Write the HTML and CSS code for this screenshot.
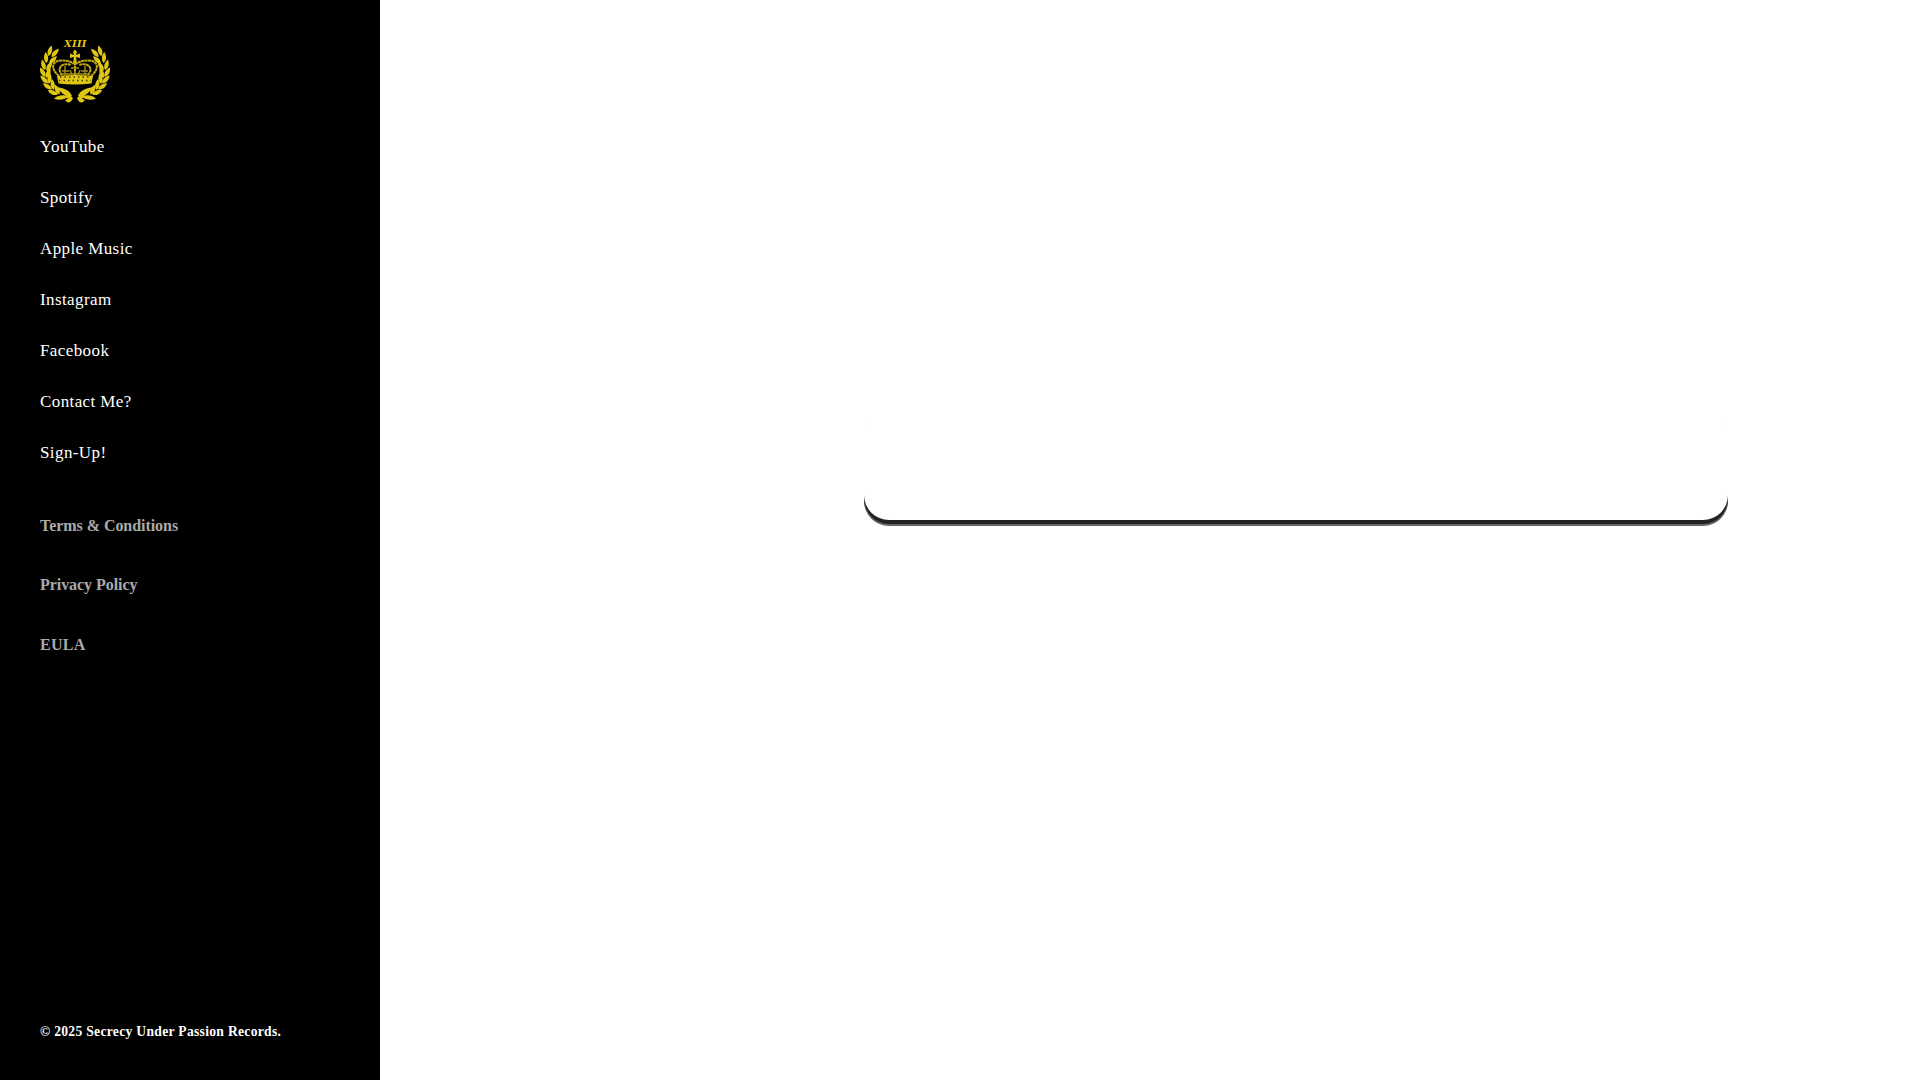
FILE: index.html
```html
<!DOCTYPE html>
<html lang="en">
<head>
<meta charset="utf-8">
<title>Secrecy Under Passion Records</title>
<link rel="stylesheet" href="styles.css">
</head>
<body>
<aside class="sidebar">
  <a class="logo" href="#">
    <svg viewBox="0 0 70 64" width="70" height="64" aria-label="XIII">
      <defs>
        <path id="leaf" d="M0 0C-2.9-3-2.9-7 0-11C2.7-7 2.7-3 0 0Z"/>
        <g id="branch">
          <use href="#leaf" transform="translate(8.5 16) rotate(16)"/>
          <use href="#leaf" transform="translate(11.5 17) rotate(42)"/>
          <use href="#leaf" transform="translate(6.5 23) rotate(-4)"/>
          <use href="#leaf" transform="translate(9 24) rotate(46)"/>
          <use href="#leaf" transform="translate(5 30) rotate(-16)"/>
          <use href="#leaf" transform="translate(6.5 31) rotate(30)"/>
          <use href="#leaf" transform="translate(5.5 37) rotate(-30)"/>
          <use href="#leaf" transform="translate(6.5 38) rotate(20)"/>
          <use href="#leaf" transform="translate(8 43.5) rotate(-44)"/>
          <use href="#leaf" transform="translate(9 44) rotate(6)"/>
          <use href="#leaf" transform="translate(12 49.5) rotate(-56)"/>
          <use href="#leaf" transform="translate(13.5 50) rotate(-8)"/>
          <use href="#leaf" transform="translate(18 54.5) rotate(-68)"/>
          <use href="#leaf" transform="translate(19.5 54.5) rotate(-26)"/>
          <path d="M17 47C23 48 30 50 32 56L28 59C25 54 20 53 17 47Z"/>
          <path d="M14 58.5C19 54.5 24 54.5 28 57C24 60 18 60.5 14 58.5ZM25 60.5L31 56.5L33 58C32 61 30 63 28 62.5Z"/>
        </g>
      </defs>
      <text class="numeral" x="35" y="7.2" textLength="23" lengthAdjust="spacingAndGlyphs">XIII</text>
      <g class="gold">
        <use href="#branch"/>
        <use href="#branch" transform="matrix(-1 0 0 1 70 0)"/>
        <path d="M35 9.5L37 12L35.8 15L40 13.5V18L36 17L37 24H33L34 17L30 18V13.5L34.2 15L33 12Z"/>
        <path d="M17 36Q35 34 53 36L51.5 43.5Q35 45.5 18.5 43.5Z"/>
      </g>
      <g class="arches">
        <path d="M19 36C9 28 13 20 22 20.5Q30 20.5 34 24M51 36C61 28 57 20 48 20.5Q40 20.5 36 24"/>
        <path d="M22 35C16 28 22 22 31 25M48 35C54 28 48 22 39 25M35 22V35"/>
      </g>
      <path class="filigree" d="M31 28h8M25 26v9M22 31h7M45 26v9M41 31h7M30 30l2 5M40 30l-2 5M20 34h30"/>
      <path class="jewels" d="M20 37h31M19 40.5h32"/>
    </svg>
  </a>
  <nav class="links">
    <a href="#">YouTube</a>
    <a href="#">Spotify</a>
    <a href="#">Apple Music</a>
    <a href="#">Instagram</a>
    <a href="#">Facebook</a>
    <a href="#">Contact Me?</a>
    <a href="#">Sign-Up!</a>
  </nav>
  <div class="legal">
    <a href="#">Terms &amp; Conditions</a>
    <a href="#">Privacy Policy</a>
    <a class="wide" href="#">EULA</a>
  </div>
  <footer class="copyright">© 2025 Secrecy Under Passion Records.</footer>
</aside>
<main class="content">
  <section class="player"></section>
</main>
</body>
</html>
```
FILE: styles.css
```css
* { box-sizing: border-box; }
body {
  margin: 0;
  display: flex;
  height: 100vh;
  overflow: hidden;
  background: #fff;
  font-family: "Liberation Serif", "Times New Roman", serif;
}
a { color: inherit; text-decoration: none; }
.sidebar {
  display: flex;
  flex-direction: column;
  flex: none;
  width: 380px;
  padding: 40px;
  background: #000;
  color: #fff;
}
.logo { display: block; height: 64px; }
.logo svg { display: block; overflow: visible; }
.numeral {
  font-family: "Liberation Serif", serif;
  font-size: 11px;
  font-weight: bold;
  font-style: italic;
  text-anchor: middle;
  fill: #e6cb13;
}
.gold { fill: #dfc611; }
.arches { fill: none; stroke: #c4ad13; stroke-width: 2; stroke-dasharray: 3 .4; }
.filigree { fill: none; stroke: #a08d10; stroke-width: 1.4; }
.jewels { fill: none; stroke: #4a4007; stroke-width: 1.3; stroke-dasharray: 1.5 3; }
.links {
  display: flex;
  flex-direction: column;
  gap: 31px;
  margin-top: 33px;
  font-size: 17px;
  line-height: 20px;
  letter-spacing: .4px;
}
.legal {
  display: flex;
  flex-direction: column;
  gap: 41.3px;
  margin-top: 54px;
  color: #aaa;
  font-size: 16px;
  font-weight: bold;
  line-height: 18px;
  letter-spacing: -.05px;
}
.legal .wide { letter-spacing: .25px; }
.copyright {
  margin-top: auto;
  font-size: 13.6px;
  font-weight: bold;
  line-height: 17px;
  letter-spacing: .3px;
}
.content {
  flex: 1;
  display: flex;
  align-items: flex-start;
  padding: 400px 0 0 484px;
}
.player {
  width: 864px;
  height: 120px;
  border-radius: 25px;
  background: #fff;
  box-shadow: 0 4px 0 #222, 0 6px 0 #666;
}
```
